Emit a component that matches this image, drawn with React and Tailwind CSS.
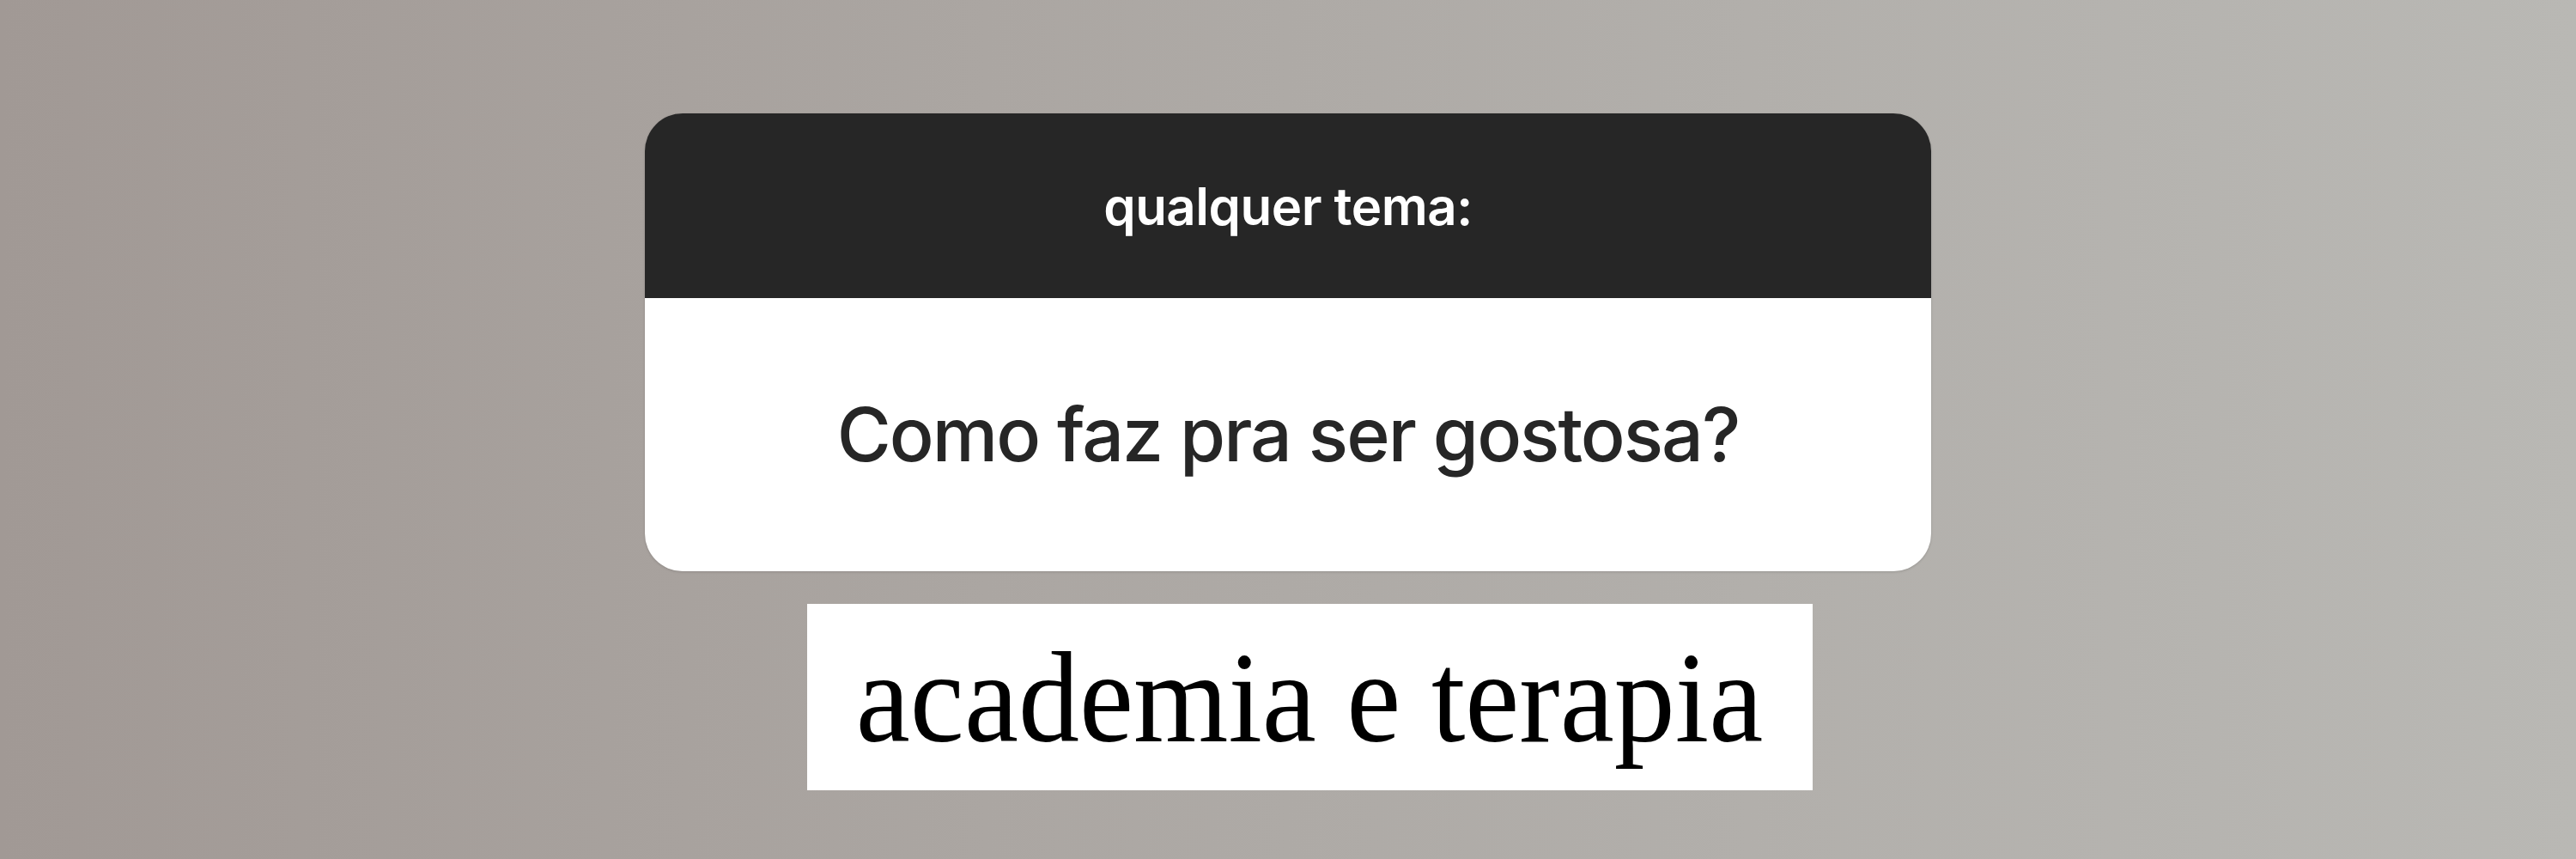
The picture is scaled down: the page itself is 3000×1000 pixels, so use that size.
export default function App() {
  return (
    <div className="flex h-[1000px] w-full flex-col items-center bg-linear-to-r from-[#a19995] via-[#aeaaa6] to-[#b9b8b4] pt-[132px]">
      <div className="flex w-[1498px] flex-col overflow-hidden rounded-[44px] shadow-[0_1px_3px_rgba(0,0,0,0.15)]">
        <div className="flex h-[215px] items-center justify-center bg-[#262626]">
          <span className="font-['Inter',sans-serif] text-[60px] font-semibold tracking-[-0.5px] text-white">
            qualquer tema:
          </span>
        </div>
        <div className="flex h-[318px] items-center justify-center bg-white">
          <span className="font-['Inter',sans-serif] text-[86px] font-medium tracking-[-2px] text-[#262626]">
            Como faz pra ser gostosa?
          </span>
        </div>
      </div>
      <div className="ml-[50px] mt-[38px] flex h-[217px] w-[1171px] items-center justify-center bg-white">
        <span className="scale-y-[1.06] font-['Liberation_Serif',serif] text-[142px] leading-none text-black">
          academia e terapia
        </span>
      </div>
    </div>
  );
}
